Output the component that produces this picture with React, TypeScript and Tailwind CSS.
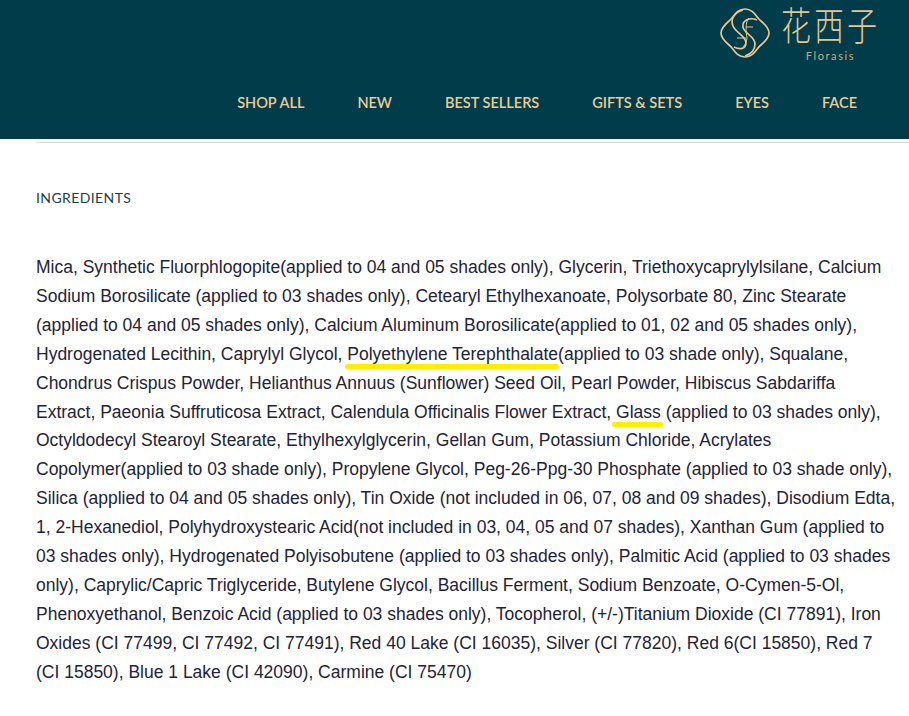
const navItems = ['SHOP ALL', 'NEW', 'BEST SELLERS', 'GIFTS & SETS', 'EYES', 'FACE']

function Logo() {
  return (
    <div className="flex items-start">
      <svg width="50" height="50" viewBox="0 0 50 50" fill="none" stroke="#e9c68f" strokeWidth="1.7" className="mt-[8px]">
        <path d="M25 1 C32 1 35 6 38 10 C41 14 49 18 49 25 C49 32 41 36 38 40 C35 44 32 49 25 49 C18 49 15 44 12 40 C9 36 1 32 1 25 C1 18 9 14 12 10 C15 6 18 1 25 1 Z" />
        <path d="M23 2 C15 4 10 11 13 18 C16 25 26 28 26 35 C26 41 20 42 14 39" />
        <path d="M37 12 C30 9 22 12 23 19 C24 26 35 28 35 36 C35 42 31 46 25 48" />
        <path d="M29 10 C25 14 26 24 27 30 C27 34 24 38 22 41 M26 19 H33 M17 30 H26" strokeWidth="1" />
      </svg>
      <div className="ml-[11px] flex flex-col items-center">
        <div className="h-[50px] origin-top scale-y-[1.3] text-[30px] leading-[36px] font-light tracking-[3px] text-[#e9c68f] font-['Noto_Sans_CJK_SC',sans-serif]">花西子</div>
        <div className="text-[11px] leading-[11px] tracking-[1.6px] text-[#c9ac7f] font-['Lato',sans-serif]">Florasis</div>
      </div>
    </div>
  )
}

function Marked({ children, className }: { children: string; className: string }) {
  return (
    <span className="relative">
      {children}
      <span className={`absolute top-[20px] h-[5px] rounded-full bg-[#ffee00] ${className}`} />
    </span>
  )
}

export default function App() {
  return (
    <div className="min-h-[716px] bg-white">
      <header className="flex h-[139px] flex-col items-end bg-[#003c4a]">
        <div className="h-[62px] pr-[29px]">
          <Logo />
        </div>
        <nav className="mt-[31px] flex gap-[53px] pr-[52px]">
          {navItems.map((item) => (
            <a key={item} className="text-[14.500px] leading-[20px] font-semibold text-[#eecb94] font-['Lato',sans-serif]">
              {item}
            </a>
          ))}
        </nav>
      </header>
      <main className="ml-[36px] pt-[3px]">
        <div className="border-t border-[#d8d8d8]" />
        <h2 className="mt-[46px] text-[14px] leading-[17px] tracking-[0.4px] text-[#1d3f4c] font-['Lato',sans-serif]">INGREDIENTS</h2>
        <p className="mt-[47px] text-[17.500px] leading-[28.900px] whitespace-nowrap text-[#232338] font-['Liberation_Sans',sans-serif]">
          Mica, Synthetic Fluorphlogopite(applied to 04 and 05 shades only), Glycerin, Triethoxycaprylylsilane, Calcium<br />
          Sodium Borosilicate (applied to 03 shades only), Cetearyl Ethylhexanoate, Polysorbate 80, Zinc Stearate<br />
          (applied to 04 and 05 shades only), Calcium Aluminum Borosilicate(applied to 01, 02 and 05 shades only),<br />
          Hydrogenated Lecithin, Caprylyl Glycol,{' '}
          <Marked className="-left-[2px] -right-[1px]">Polyethylene Terephthalate</Marked>
          (applied to 03 shade only), Squalane,<br />
          Chondrus Crispus Powder, Helianthus Annuus (Sunflower) Seed Oil, Pearl Powder, Hibiscus Sabdariffa<br />
          Extract, Paeonia Suffruticosa Extract, Calendula Officinalis Flower Extract,{' '}
          <Marked className="-left-[4px] -right-[2px]">Glass</Marked> (applied to 03 shades only),<br />
          Octyldodecyl Stearoyl Stearate, Ethylhexylglycerin, Gellan Gum, Potassium Chloride, Acrylates<br />
          Copolymer(applied to 03 shade only), Propylene Glycol, Peg-26-Ppg-30 Phosphate (applied to 03 shade only),<br />
          Silica (applied to 04 and 05 shades only), Tin Oxide (not included in 06, 07, 08 and 09 shades), Disodium Edta,<br />
          1, 2-Hexanediol, Polyhydroxystearic Acid(not included in 03, 04, 05 and 07 shades), Xanthan Gum (applied to<br />
          03 shades only), Hydrogenated Polyisobutene (applied to 03 shades only), Palmitic Acid (applied to 03 shades<br />
          only), Caprylic/Capric Triglyceride, Butylene Glycol, Bacillus Ferment, Sodium Benzoate, O-Cymen-5-Ol,<br />
          Phenoxyethanol, Benzoic Acid (applied to 03 shades only), Tocopherol, (+/-)Titanium Dioxide (CI 77891), Iron<br />
          Oxides (CI 77499, CI 77492, CI 77491), Red 40 Lake (CI 16035), Silver (CI 77820), Red 6(CI 15850), Red 7<br />
          (CI 15850), Blue 1 Lake (CI 42090), Carmine (CI 75470)
        </p>
      </main>
    </div>
  )
}
